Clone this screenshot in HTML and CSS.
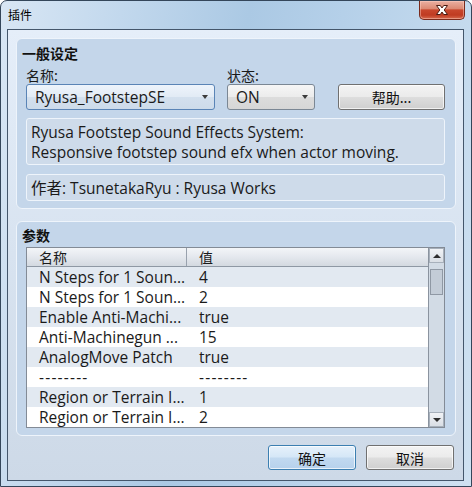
FILE: index.html
```html
<!DOCTYPE html>
<html lang="zh-CN">
<head>
<meta charset="utf-8">
<title>插件</title>
<link rel="stylesheet" href="styles.css">
</head>
<body>
<div class="window">
  <div class="titlebar">
    <span class="title">插件</span>
    <div class="close-btn">
      <svg width="14" height="12" viewBox="0 0 14 12">
        <path d="M1.5 1.5H5.3L7 4L8.7 1.5H12.5L9.2 6L12.5 10.5H8.7L7 8L5.3 10.5H1.5L4.8 6Z" fill="#fff" stroke="#4b1a10" stroke-width="1" stroke-linejoin="round"/>
      </svg>
    </div>
  </div>
  <div class="client">
    <section class="group general">
      <div class="group-title">一般设定</div>
      <div class="field-grid">
        <label class="field-label">名称:</label>
        <label class="field-label">状态:</label>
        <span></span>
        <div class="combo combo-focus"><span>Ryusa_FootstepSE</span><i class="caret"></i></div>
        <div class="combo"><span>ON</span><i class="caret"></i></div>
        <button class="btn help-btn">帮助...</button>
      </div>
      <div class="info-box desc">Ryusa Footstep Sound Effects System:<br>Responsive footstep sound efx when actor moving.</div>
      <div class="info-box author">作者: TsunetakaRyu : Ryusa Works</div>
    </section>

    <section class="group params">
      <div class="group-title">参数</div>
      <div class="table">
        <div class="table-main">
          <div class="row head">
            <div class="cell name">名称</div>
            <div class="cell val">值</div>
          </div>
          <div class="row"><div class="cell name">N Steps for 1 Soun...</div><div class="cell val">4</div></div>
          <div class="row"><div class="cell name">N Steps for 1 Soun...</div><div class="cell val">2</div></div>
          <div class="row"><div class="cell name">Enable Anti-Machi...</div><div class="cell val">true</div></div>
          <div class="row"><div class="cell name">Anti-Machinegun ...</div><div class="cell val">15</div></div>
          <div class="row"><div class="cell name">AnalogMove Patch</div><div class="cell val">true</div></div>
          <div class="row sep"><div class="cell name">--------</div><div class="cell val">--------</div></div>
          <div class="row"><div class="cell name">Region or Terrain I...</div><div class="cell val">1</div></div>
          <div class="row"><div class="cell name">Region or Terrain I...</div><div class="cell val">2</div></div>
        </div>
        <div class="scrollbar">
          <div class="sb-btn"><i class="arrow up"></i></div>
          <div class="sb-track"><div class="sb-thumb"></div></div>
          <div class="sb-btn"><i class="arrow down"></i></div>
        </div>
      </div>
    </section>

    <div class="footer">
      <button class="btn btn-default">确定</button>
      <button class="btn">取消</button>
    </div>
  </div>
</div>
</body>
</html>
```

FILE: styles.css
```css
html, body {
  margin: 0;
  padding: 0;
  width: 472px;
  height: 487px;
  overflow: hidden;
  background: #ffffff;
}

body {
  font-family: "Open Sans", "Noto Sans CJK SC", sans-serif;
  font-size: 15.5px;
  color: #1a1a1a;
}

/* Aero window frame */
.window {
  box-sizing: border-box;
  width: 472px;
  height: 487px;
  border: 1px solid #34465a;
  border-radius: 7px 7px 0 0;
  background: linear-gradient(100deg, #d8e6f4 0%, #c2d8ed 22%, #abc9e4 45%, #b5d0e9 62%, #cfe1f1 100%);
  display: flex;
  flex-direction: column;
}

.titlebar {
  height: 28px;
  flex: none;
  display: flex;
  justify-content: space-between;
  align-items: flex-start;
}

.title {
  padding: 6px 0 0 7px;
  font-family: "Noto Sans CJK SC", sans-serif;
  font-size: 12px;
  line-height: 16px;
  color: #000;
}

.close-btn {
  box-sizing: border-box;
  width: 46px;
  height: 19px;
  margin-right: 6px;
  border: 1px solid #7a2a1c;
  border-top: none;
  border-radius: 0 0 5px 5px;
  background: linear-gradient(180deg, #eab0a2 0%, #dc8a74 42%, #c8472d 50%, #c03b22 78%, #d66a4e 100%);
  box-shadow: inset 0 0 0 1px rgba(255, 210, 200, 0.45);
  display: flex;
  align-items: center;
  justify-content: center;
}

/* Dialog client area */
.client {
  box-sizing: border-box;
  height: 452px;
  margin: 0 7px 0 6px;
  border: 1px solid #44566b;
  background: linear-gradient(180deg, #e5eef9 0%, #d9e4f1 45%, #cdd9e7 100%);
  padding: 8px 7px 0 8px;
}

.group {
  box-sizing: border-box;
  border: 1px solid #eef4fb;
  border-radius: 6px;
  background: #c4d6ea;
  padding: 0 10px 7px 9px;
}

.general {
  height: 171px;
  margin-bottom: 12px;
}

.params {
  height: 215px;
}

.group-title {
  font-family: "Noto Sans CJK SC", sans-serif;
  font-weight: bold;
  font-size: 14px;
  line-height: 20px;
  margin-left: -4px;
  color: #111;
}

.general .group-title {
  padding-top: 4px;
}

.params .group-title {
  padding-top: 3px;
}

.field-grid {
  margin-top: 4px;
  display: grid;
  grid-template-columns: 189px 88px 1fr;
  grid-template-rows: 17px 26px;
  column-gap: 12px;
}

.field-label {
  font-family: "Noto Sans CJK SC", sans-serif;
  font-size: 14px;
  line-height: 17px;
}

.combo {
  box-sizing: border-box;
  height: 26px;
  border: 1px solid #7b8794;
  border-radius: 3px;
  background: linear-gradient(180deg, #f6f6f6 0%, #ececec 48%, #dcdcdc 52%, #d6d6d6 100%);
  display: flex;
  align-items: center;
  justify-content: space-between;
  padding: 0 6px 0 8px;
  line-height: 20px;
}

.combo-focus {
  border-color: #5a84b6;
  background: linear-gradient(180deg, #eef4fb 0%, #e2ebf5 48%, #d3e0ee 52%, #cddbea 100%);
}

.caret {
  width: 0;
  height: 0;
  border-left: 3.5px solid transparent;
  border-right: 3.5px solid transparent;
  border-top: 4px solid #3c3c3c;
}

.btn {
  box-sizing: border-box;
  height: 25px;
  border: 1px solid #707070;
  border-radius: 3px;
  background: linear-gradient(180deg, #f3f3f3 0%, #ebebeb 48%, #dddddd 52%, #cfcfcf 100%);
  box-shadow: inset 0 0 0 1px rgba(255, 255, 255, 0.7);
  font-family: "Noto Sans CJK SC", sans-serif;
  font-size: 14px;
  color: #111;
  padding: 0;
  line-height: 20px;
}

.help-btn {
  height: 26px;
  margin-left: 11px;
}

.info-box {
  box-sizing: border-box;
  border: 1px solid #eef4fb;
  border-radius: 3px;
  background: #cedbea;
  padding: 3px 4px 1px;
  line-height: 20px;
}

.desc {
  margin-top: 8px;
  height: 47px;
}

.author {
  margin-top: 9px;
  height: 27px;
  padding-top: 3px;
}

/* Parameter list */
.table {
  margin-top: 2px;
  height: 181px;
  box-sizing: border-box;
  border: 1px solid #838b96;
  display: flex;
  background: #ffffff;
}

.table-main {
  flex: 1;
  overflow: hidden;
}

.row {
  height: 20px;
  display: flex;
  line-height: 20px;
  white-space: nowrap;
}

.row:nth-child(even) {
  background: #e2e9f1;
}

.row.sep .cell {
  letter-spacing: 1.2px;
}

.row.head {
  height: 19px;
  box-sizing: border-box;
  border-bottom: 1px solid #8e98a4;
  background: linear-gradient(180deg, #f3f5f8 0%, #e4e8ee 50%, #d3d9e0 100%);
  line-height: 18px;
}

.cell.name {
  box-sizing: border-box;
  width: 160px;
  padding-left: 12px;
}

.cell.val {
  padding-left: 12px;
}

.head .cell {
  font-family: "Noto Sans CJK SC", sans-serif;
  font-size: 14px;
}

.head .cell.name {
  border-right: 1px solid #98a1ad;
}

.scrollbar {
  width: 15px;
  border-left: 1px solid #8a939f;
  background: #d2dbe5;
  display: flex;
  flex-direction: column;
}

.sb-btn {
  height: 15px;
  box-sizing: border-box;
  border: 1px solid #a7b0bb;
  background: linear-gradient(180deg, #f1f3f6 0%, #d9dee5 100%);
  display: flex;
  align-items: center;
  justify-content: center;
}

.sb-track {
  flex: 1;
  padding-top: 6px;
}

.sb-thumb {
  box-sizing: border-box;
  height: 26px;
  margin: 0 1px;
  border: 1px solid #8f98a4;
  background: #c3ccd7;
}

.arrow {
  width: 0;
  height: 0;
  border-left: 4px solid transparent;
  border-right: 4px solid transparent;
}

.arrow.up {
  border-bottom: 4px solid #2e2e2e;
}

.arrow.down {
  border-top: 4px solid #2e2e2e;
}

.footer {
  margin-top: 9px;
  display: flex;
  justify-content: flex-end;
  gap: 10px;
  padding-right: 2px;
}

.footer .btn {
  width: 88px;
}

.btn-default {
  border-color: #3c7fb1;
  background: linear-gradient(180deg, #e6f1fb 0%, #d5e7f7 48%, #c1d9f0 52%, #b6d1ec 100%);
}
```
